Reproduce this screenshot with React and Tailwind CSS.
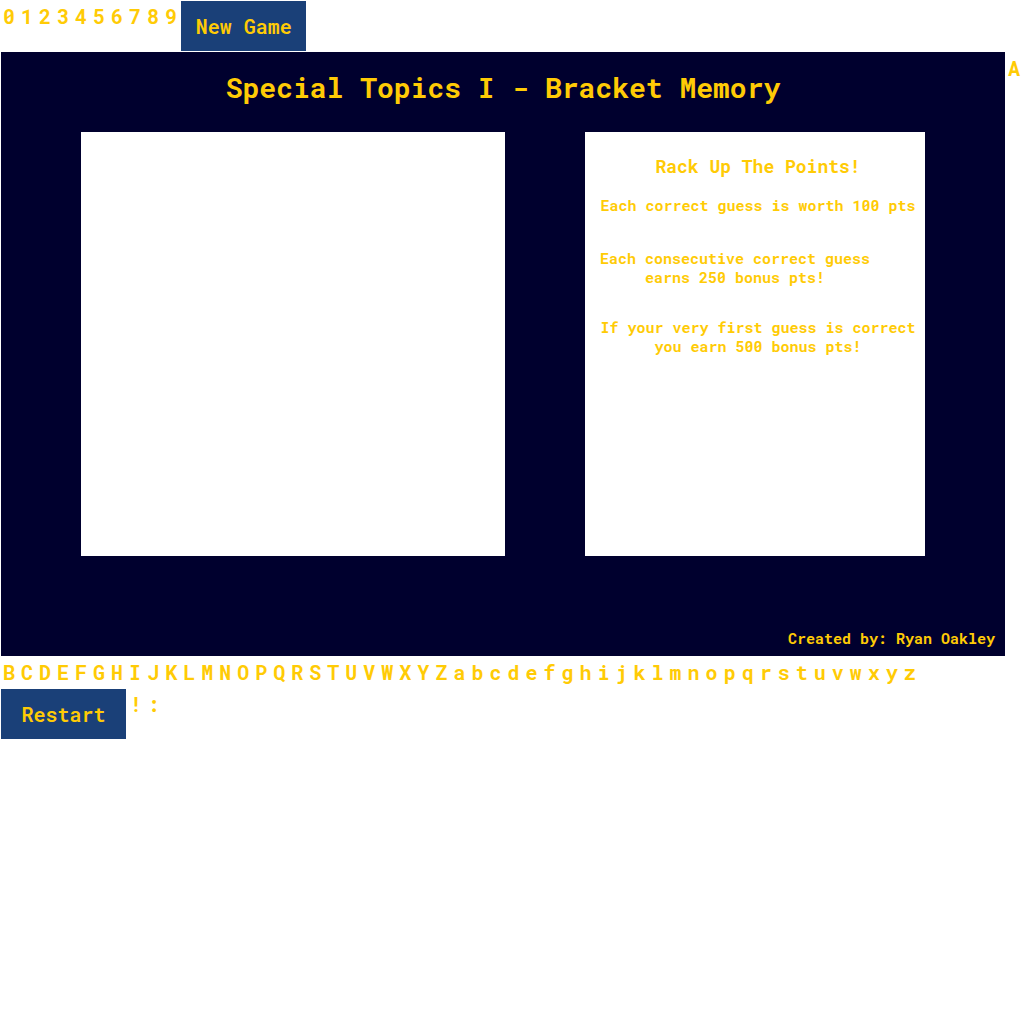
const DIGITS = "0123456789".split("");
const UPPER = "BCDEFGHIJKLMNOPQRSTUVWXYZ".split("");
const LOWER = "abcdefghijklmnopqrstuvwxyz".split("");

const FONT = "font-['Roboto_Mono','DejaVu_Sans_Mono',monospace]";

function Key({ ch }) {
  return (
    <span className="mx-[3px] text-[20px] leading-[32px] font-bold text-[#ffcb05]">
      {ch}
    </span>
  );
}

function GameButton({ label, width }) {
  return (
    <button
      className={`m-px h-[50px] bg-[#1a4078] text-[20px] font-semibold text-[#ffcb05] text-center ${width}`}
    >
      {label}
    </button>
  );
}

export default function App() {
  return (
    <div className={`flex flex-wrap items-start w-[1024px] ${FONT}`}>
      {DIGITS.map((d) => (
        <Key key={d} ch={d} />
      ))}
      <GameButton label="New Game" width="w-[125px]" />

      {/* Board */}
      <div className="ml-px w-[1004px] h-[604px] bg-[#00002e] flex flex-col pt-[18px] pb-[8px]">
        <h1 className="text-center text-[28px] leading-[36px] font-bold text-[#ffcb05]">
          Special Topics I - Bracket Memory
        </h1>

        <div className="mt-[26px] flex gap-[80px] px-[80px]">
          <div className="w-[424px] h-[424px] bg-white" />

          <div className="w-[340px] h-[424px] bg-white pt-[22px] pl-[15px] pr-[9px] text-[#ffcb05] font-bold">
            <h3 className="text-center text-[18px] leading-[24px]">Rack Up The Points!</h3>
            <p className="mt-[18px] text-center text-[15px] leading-[19px] whitespace-nowrap">
              Each correct guess is worth 100 pts
            </p>
            <p className="mt-[34px] w-fit text-center text-[15px] leading-[19px] whitespace-nowrap">
              Each consecutive correct guess
              <br />
              earns 250 bonus pts!
            </p>
            <p className="mt-[31px] text-center text-[15px] leading-[19px] whitespace-nowrap">
              If your very first guess is correct
              <br />
              you earn 500 bonus pts!
            </p>
          </div>
        </div>

        <div className="mt-auto pr-[10px] text-right text-[15px] leading-[19px] font-bold text-[#ffcb05]">
          Created by: Ryan Oakley
        </div>
      </div>

      <Key ch="A" />
      {UPPER.map((c) => (
        <Key key={c} ch={c} />
      ))}
      {LOWER.map((c) => (
        <Key key={c} ch={c} />
      ))}

      <GameButton label="Restart" width="w-[125px]" />
      <Key ch="!" />
      <Key ch=":" />
    </div>
  );
}
